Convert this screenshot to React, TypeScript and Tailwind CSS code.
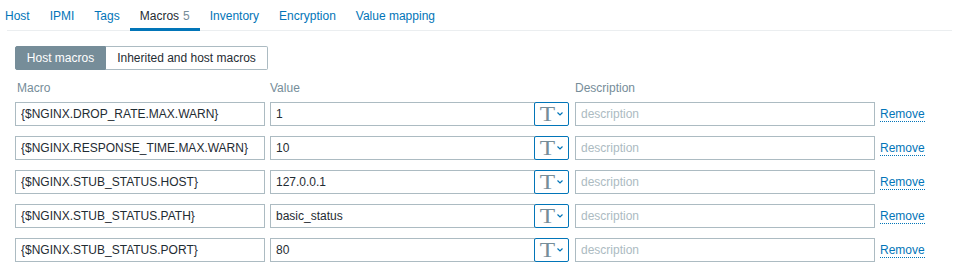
import React, { useState } from 'react'

const tabs = ['Host', 'IPMI', 'Tags', 'Macros', 'Inventory', 'Encryption', 'Value mapping']

const macros = [
  { macro: '{$NGINX.DROP_RATE.MAX.WARN}', value: '1' },
  { macro: '{$NGINX.RESPONSE_TIME.MAX.WARN}', value: '10' },
  { macro: '{$NGINX.STUB_STATUS.HOST}', value: '127.0.0.1' },
  { macro: '{$NGINX.STUB_STATUS.PATH}', value: 'basic_status' },
  { macro: '{$NGINX.STUB_STATUS.PORT}', value: '80' },
]

const inputClass =
  'h-[24px] border border-[#acbbc2] bg-white px-[5px] text-[12px] text-[#1f2c33] outline-none placeholder:text-[#acbbc2]'

const App = () => {
  const [mode, setMode] = useState('host')
  const [rows, setRows] = useState(macros)

  return (
    <div className="min-h-screen bg-white font-['Liberation_Sans',Arial,sans-serif] text-[12px] text-[#1f2c33] overflow-hidden">
      {/* Tabs */}
      <div className="ml-[7px] w-[945px] flex border-b border-[#ebeef0] h-[31px]">
        <div className="flex -ml-[12px]">
          {tabs.map((t) => (
            <div
              key={t}
              className={
                t === 'Macros'
                  ? 'h-[31px] px-[10px] pt-[9px] leading-[14px] text-[#1f2c33] border-b-[3px] border-[#0275b8]'
                  : 'h-[31px] px-[10px] pt-[9px] leading-[14px] text-[#0275b8]'
              }
            >
              {t}
              {t === 'Macros' && <span className="ml-[4px] text-[#768d99]">5</span>}
            </div>
          ))}
        </div>
      </div>

      <div className="pl-[15px]">
        {/* Segmented switch */}
        <div className="mt-[15px] flex h-[24px]">
          <button
            onClick={() => setMode('host')}
            className={
              mode === 'host'
                ? 'w-[91px] h-[24px] rounded-l-[2px] bg-[#768d99] text-white border border-[#768d99] leading-[22px]'
                : 'w-[91px] h-[24px] rounded-l-[2px] bg-white text-[#1f2c33] border border-[#acbbc2] leading-[22px]'
            }
          >
            Host macros
          </button>
          <button
            onClick={() => setMode('inherited')}
            className={
              mode === 'inherited'
                ? 'w-[162px] h-[24px] rounded-r-[2px] bg-[#768d99] text-white border border-[#768d99] leading-[22px]'
                : 'w-[162px] h-[24px] rounded-r-[2px] bg-white text-[#1f2c33] border border-l-0 border-[#acbbc2] leading-[22px]'
            }
          >
            Inherited and host macros
          </button>
        </div>

        {/* Header */}
        <div className="mt-[11px] flex gap-[5px] leading-[14px] text-[#768d99]">
          <div className="w-[250px] pl-[2px]">Macro</div>
          <div className="w-[300px]">Value</div>
          <div className="w-[300px]">Description</div>
        </div>

        {/* Rows */}
        <div className="mt-[7px] flex flex-col gap-[10px]">
          {rows.map((r, i) => (
            <div key={r.macro} className="flex items-center gap-[5px]">
              <input className={`${inputClass} w-[250px]`} defaultValue={r.macro} />
              <div className="flex w-[300px]">
                <input className={`${inputClass} w-[265px]`} defaultValue={r.value} />
                <button className="w-[35px] h-[24px] border border-[#0275b8] rounded-[2px] bg-white flex items-center justify-center gap-[3px] -ml-px pl-[1px]">
                  <span className="font-['Liberation_Serif','Times_New_Roman',serif] text-[21px] leading-[20px] text-[#768d99] inline-block scale-x-[1.2]">
                    T
                  </span>
                  <svg width="6" height="4" viewBox="0 0 6 4" className="ml-[1px]">
                    <path d="M0.5 0.5 L3 3 L5.5 0.5" fill="none" stroke="#0275b8" strokeWidth="1.2" />
                  </svg>
                </button>
              </div>
              <input className={`${inputClass} w-[300px]`} placeholder="description" />
              <button
                onClick={() => setRows(rows.filter((_, j) => j !== i))}
                className="text-[#0275b8] leading-[14px] border-b border-dotted border-[#0275b8]"
              >
                Remove
              </button>
            </div>
          ))}
        </div>
      </div>
    </div>
  )
}

export default App
